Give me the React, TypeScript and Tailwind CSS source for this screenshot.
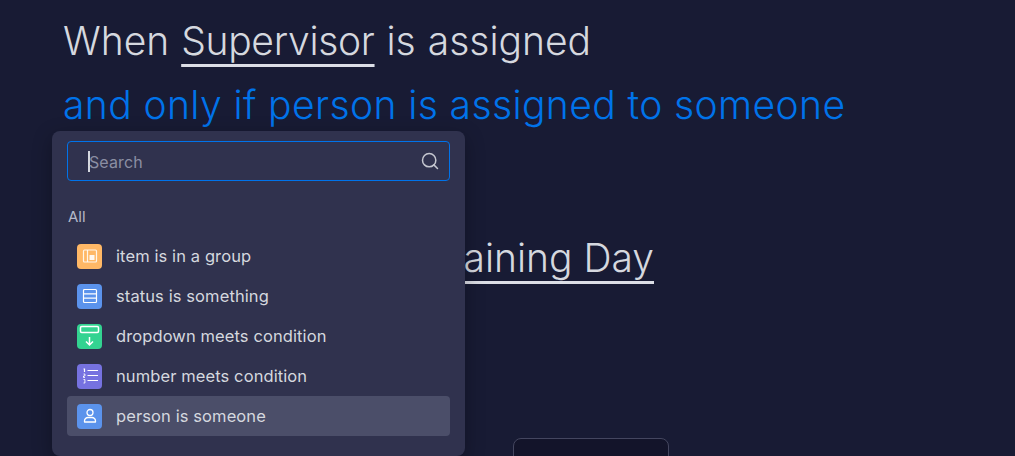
import { Search } from "lucide-react";

function GroupIcon() {
  return (
    <svg width="18" height="18" viewBox="0 0 18 18" fill="none">
      <rect x="2.5" y="3" width="13" height="12" rx="1" stroke="white" strokeOpacity="0.85" strokeWidth="1.2" />
      <line x1="6.5" y1="3" x2="6.5" y2="15" stroke="white" strokeOpacity="0.85" strokeWidth="1.2" />
      <rect x="8.5" y="8" width="5" height="5" fill="white" fillOpacity="0.9" />
    </svg>
  );
}

function StatusIcon() {
  return (
    <svg width="18" height="18" viewBox="0 0 18 18" fill="none" stroke="white" strokeWidth="1.2">
      <rect x="2.5" y="2.5" width="13" height="13" rx="1" />
      <line x1="2.5" y1="6.8" x2="15.5" y2="6.8" />
      <line x1="2.5" y1="11.2" x2="15.5" y2="11.2" />
    </svg>
  );
}

function DropdownIcon() {
  return (
    <svg width="25" height="25" viewBox="0 0 25 25" fill="none" stroke="white" strokeWidth="1.5">
      <rect x="3.5" y="2.5" width="18" height="6" rx="1.2" />
      <path d="M12.5 13v8M9 17.5l3.5 3.5 3.5-3.5" />
    </svg>
  );
}

function NumberIcon() {
  return (
    <svg width="18" height="18" viewBox="0 0 18 18" fill="none" stroke="white" strokeWidth="1.2">
      <line x1="6.5" y1="3.5" x2="17" y2="3.5" />
      <line x1="6.5" y1="8.5" x2="17" y2="8.5" />
      <line x1="6.5" y1="13.5" x2="17" y2="13.5" />
      <path d="M2.5 2h1v3" />
      <path d="M2.5 7h1.4v2H2.5v1.5h1.4" strokeWidth="0.9" />
      <path d="M2.5 12.5h1.4v3.5H2.5" strokeWidth="0.9" />
    </svg>
  );
}

function PersonIcon() {
  return (
    <svg width="18" height="18" viewBox="0 0 18 18" fill="none" stroke="white" strokeWidth="1.3">
      <circle cx="9" cy="5.5" r="3" />
      <path d="M3.5 15v-1A3.5 3.5 0 0 1 7 10.5h4a3.5 3.5 0 0 1 3.5 3.5v1z" strokeLinejoin="round" />
    </svg>
  );
}

const options = [
  { label: "item is in a group", color: "bg-[#ffb866]", icon: GroupIcon },
  { label: "status is something", color: "bg-[#5b93ec]", icon: StatusIcon },
  { label: "dropdown meets condition", color: "bg-[#33d391]", icon: DropdownIcon },
  { label: "number meets condition", color: "bg-[#7672e0]", icon: NumberIcon },
  { label: "person is someone", color: "bg-[#5b93ec]", icon: PersonIcon, active: true },
];

const underlined = "underline decoration-[3px] underline-offset-[9px] [text-decoration-skip-ink:none] decoration-[#dcdee6]";

export default function App() {
  return (
    <div className="relative h-[456px] w-[1015px] overflow-hidden bg-[#181b34] font-['Inter',sans-serif]">
      <div className="pl-[63px] text-[39px] font-light leading-[63px] text-[#d5d8df]">
        <div className="h-[63px] pt-[9px] [word-spacing:1px]">
          When <span className={`tracking-[-0.3px] ${underlined}`}>Supervisor</span> is assigned
        </div>
        <div className="h-[63px] pt-[10px] whitespace-nowrap tracking-[0.4px] text-[#0073ea]">
          and only if person is assigned to someone
        </div>
        <div className="mt-[91px] h-[63px] pr-[361px] pt-[9px] text-right">
          <span className={underlined}>Training Day</span>
        </div>
      </div>

      <div className="ml-[513px] mt-[158px] h-[40px] w-[156px] rounded-lg border border-[#44465f] bg-[#13142a]" />

      {/* condition picker */}
      <div className="absolute left-[52px] top-[131px] h-[325px] w-[413px] rounded-lg bg-[#30324e] px-[15px] pt-[10px] shadow-[0_6px_20px_rgba(0,0,0,0.3)]">
        <div className="flex h-[40px] items-center justify-between rounded border border-[#0073ea] pl-[20px] pr-[9px]">
          <div className="flex items-center">
            <span className="h-[21px] w-[2px] bg-[#d5d8df]" />
            <span className="-ml-px pt-px text-base tracking-[0.1px] text-[#8b8ea3]">Search</span>
          </div>
          <Search size={20} strokeWidth={1.8} className="text-[#c5c7d0]" />
        </div>
        <div className="mb-[9px] mt-[26px] pl-px text-[15px] leading-[20px] text-[#b5b8c9]">All</div>
        <div className="flex flex-col">
          {options.map((o) => (
            <div
              key={o.label}
              className={`flex h-[40px] items-center gap-[14px] rounded px-[10px] ${o.active ? "bg-[#4b4e69]" : ""}`}
            >
              <div className={`flex h-[25px] w-[25px] items-center justify-center overflow-hidden rounded ${o.color}`}>
                <o.icon />
              </div>
              <span className="text-[16.5px] tracking-[0.1px] text-[#d5d8df]">{o.label}</span>
            </div>
          ))}
        </div>
      </div>
    </div>
  );
}
